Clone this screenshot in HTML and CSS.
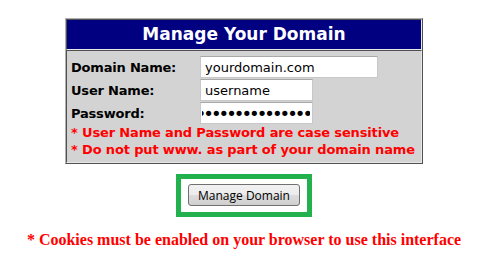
FILE: index.html
```html
<!DOCTYPE html>
<html lang="en">
<head>
  <meta charset="UTF-8" />
  <title>Manage Your Domain</title>
  <link rel="stylesheet" href="styles.css">
</head>
<body>

  <div class="panel">
    <div class="panel-head">Manage Your Domain</div>
    <div class="panel-body">
      <form class="login-form" onsubmit="return false">
        <label for="domain">Domain Name:</label>
        <input type="text" id="domain" class="field wide" value="yourdomain.com">
        <label for="user">User Name:</label>
        <input type="text" id="user" class="field" value="username">
        <label for="pass">Password:</label>
        <input type="password" id="pass" class="field pass" value="yourpasswordgoeshere">
      </form>
      <div class="note">* User Name and Password are case sensitive</div>
      <div class="note">* Do not put www. as part of your domain name</div>
    </div>
  </div>

  <div class="action">
    <div class="highlight">
      <button class="manage-btn">Manage Domain</button>
    </div>
  </div>

  <p class="cookie-note">* Cookies must be enabled on your browser to use this interface</p>

</body>
</html>
```

FILE: styles.css
```css
* {
  box-sizing: border-box;
}

body {
  margin: 0;
  background: #fff;
  font-family: 'DejaVu Sans', Verdana, sans-serif;
  color: #000;
}

.panel {
  width: 358px;
  margin: 18px auto 0;
  border: 1px solid;
  border-color: #b0b0b0 #505050 #505050 #b0b0b0;
}

.panel-head {
  background-color: #000080;
  color: #fff;
  font-weight: bold;
  font-size: 17px;
  text-align: center;
  height: 31px;
  line-height: 29px;
  border: 1px solid;
  border-color: #505050 #e8e8e8 #e8e8e8 #505050;
}

.panel-body {
  background-color: #d3d3d3;
  padding: 5px 4px 4px;
  border: 1px solid;
  border-color: #505050 #e8e8e8 #e8e8e8 #505050;
}

.login-form {
  display: grid;
  grid-template-columns: 129px auto;
  row-gap: 1px;
  align-items: center;
  margin: 0;
}

.login-form label {
  font-weight: bold;
  font-size: 13px;
  letter-spacing: -0.2px;
  padding-top: 1px;
}

.field {
  height: 22px;
  width: 113px;
  border: 1px solid #c8c8c8;
  border-top-color: #a8a8a8;
  padding: 0 4px;
  font-family: 'DejaVu Sans', Verdana, sans-serif;
  font-size: 13px;
  color: #000;
  background: #fff;
}

.field.wide {
  width: 178px;
}

.field.pass {
  direction: rtl;
  padding: 0 2px 0 1px;
  font-size: 18px;
  letter-spacing: -3px;
}

.note {
  color: #ff0000;
  font-weight: bold;
  font-size: 13px;
  line-height: 17px;
  white-space: nowrap;
  letter-spacing: -0.15px;
}

.action {
  display: flex;
  justify-content: center;
  margin-top: 10px;
}

.highlight {
  border: 5px solid #22b14c;
  padding: 5px 6px 6px 7px;
  width: 136px;
}

.manage-btn {
  width: 112px;
  height: 22px;
  padding: 0;
  border: 1px solid #707070;
  border-radius: 3px;
  background: linear-gradient(#f2f2f2, #ebebeb 50%, #dddddd 50%, #cfcfcf);
  font-family: 'Open Sans', sans-serif;
  font-size: 12px;
  color: #000;
  cursor: pointer;
}

.cookie-note {
  margin: 14px 0 0;
  text-align: center;
  color: #ff0000;
  font-family: 'Liberation Serif', 'Times New Roman', serif;
  font-weight: bold;
  font-size: 16px;
}
```
